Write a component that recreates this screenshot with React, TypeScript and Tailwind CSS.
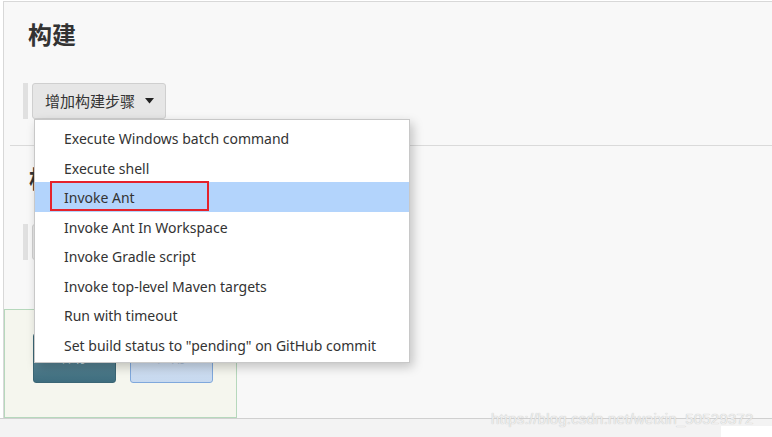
import React from "react";

const items = [
  "Execute Windows batch command",
  "Execute shell",
  "Invoke Ant",
  "Invoke Ant In Workspace",
  "Invoke Gradle script",
  "Invoke top-level Maven targets",
  "Run with timeout",
  'Set build status to "pending" on GitHub commit',
];

function Caret() {
  return (
    <svg width="9" height="6" viewBox="0 0 9 6" className="ml-[10px]">
      <path d="M0 0 L9 0 L4.5 5.5 Z" fill="#222" />
    </svg>
  );
}

function ButtonGroup({ label }: { label: string }) {
  return (
    <div className="flex items-stretch h-[36px] ml-[19px]">
      <div className="w-[5px] bg-[#e0e0e0]" />
      <div className="ml-[4px] flex items-center pl-[12px] pr-[11px] bg-[#e6e6e6] border border-[#cfcfcf] rounded-[3px] text-[15px] text-[#333]">
        <span>{label}</span>
        <Caret />
      </div>
    </div>
  );
}

export default function App() {
  return (
    <div
      className="w-[772px] h-[437px] bg-white relative overflow-hidden"
      style={{ fontFamily: '"Noto Sans", "Noto Sans CJK SC", sans-serif' }}
    >
      <div className="ml-[3px] mt-[1px] h-[417px] border-t border-l border-[#d8d8d8] bg-[#f8f8f8] flex flex-col">
        <div className="pl-[24px] pt-[17px] text-[24px] font-bold text-[#333] leading-[32px]">构建</div>
        <div className="mt-[32px]">
          <ButtonGroup label="增加构建步骤" />
        </div>
        <div className="mt-[26px] ml-[6px] border-t border-[#dadada]" />
        <div className="pl-[25px] pt-[17px] text-[24px] font-bold text-[#333] leading-[32px]">构建后操作</div>
        <div className="mt-[29px]">
          <ButtonGroup label="增加构建后操作步骤" />
        </div>
        <div className="mt-[49px] w-[233px] flex-1 bg-[#f5f6ee] border border-[#b6d8bc] flex items-end gap-[14px] pl-[28px] pb-[34px]">
          <div className="w-[83px] h-[50px] rounded-[3px] border border-[#3b6675] bg-gradient-to-b from-[#7aa3b1] to-[#3e6d7e] flex items-start justify-center pt-[12px] text-[#c9d8dd] text-[14px]">
            保存
          </div>
          <div className="w-[83px] h-[50px] rounded-[3px] border border-[#7fa8dc] bg-gradient-to-b from-[#dce7f5] to-[#c7d9ef] flex items-start justify-center pt-[12px] text-[#aabdd3] text-[14px]">
            应用
          </div>
        </div>
      </div>
      <div className="h-[19px] border-t border-[#d0d0d0] bg-[#f3f3f3] flex justify-end items-end">
        <div className="w-[51px] h-[11px] bg-white" />
      </div>

      {/* dropdown menu overlay */}
      <div className="absolute left-[34px] top-[119px] w-[376px] h-[244px] bg-white border border-[#c8c8c8] shadow-[3px_4px_10px_rgba(0,0,0,0.22)] pt-[3px]">
        {items.map((t, i) => (
          <div
            key={t}
            className={
              "relative h-[29.5px] flex items-center pl-[29px] pt-[2px] text-[14px] text-[#333] " +
              (i === 2 ? "bg-[#b3d4fc]" : "")
            }
          >
            {t}
            {i === 2 && (
              <div className="absolute left-[15px] top-[-1px] w-[159px] h-[30px] border-2 border-[#e5222b]" />
            )}
          </div>
        ))}
      </div>

      {/* watermark */}
      <div
        className="absolute left-[491px] top-[408px] text-[15px] text-[#eeeeee] tracking-[0.2px]"
        style={{ fontFamily: '"Liberation Sans", sans-serif', textShadow: "0 0 1px #b5b5b5" }}
      >
        https://blog.csdn.net/weixin_50529372
      </div>
    </div>
  );
}
